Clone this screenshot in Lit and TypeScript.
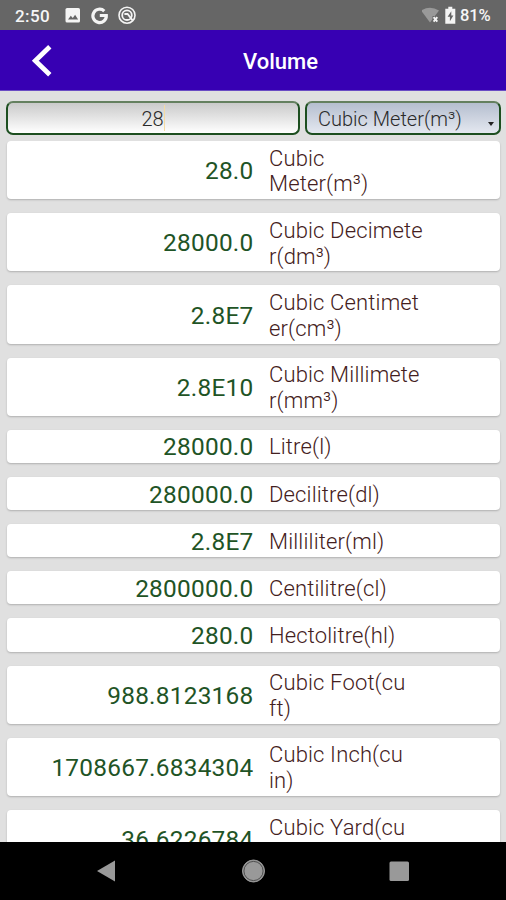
import { LitElement, html, css, svg } from "lit";
import { customElement, property } from "lit/decorators.js";

interface Row {
  value: string;
  lines: string[];
}

const ROWS: Row[] = [
  { value: "28.0", lines: ["Cubic", "Meter(m³)"] },
  { value: "28000.0", lines: ["Cubic Decimete", "r(dm³)"] },
  { value: "2.8E7", lines: ["Cubic Centimet", "er(cm³)"] },
  { value: "2.8E10", lines: ["Cubic Millimete", "r(mm³)"] },
  { value: "28000.0", lines: ["Litre(l)"] },
  { value: "280000.0", lines: ["Decilitre(dl)"] },
  { value: "2.8E7", lines: ["Milliliter(ml)"] },
  { value: "2800000.0", lines: ["Centilitre(cl)"] },
  { value: "280.0", lines: ["Hectolitre(hl)"] },
  { value: "988.8123168", lines: ["Cubic Foot(cu", "ft)"] },
  { value: "1708667.6834304", lines: ["Cubic Inch(cu", "in)"] },
  { value: "36.6226784", lines: ["Cubic Yard(cu", "\u00a0"] },
];

@customElement("status-bar")
export class StatusBar extends LitElement {
  static styles = css`
    :host {
      display: flex;
      align-items: center;
      height: 30px;
      flex: none;
      box-sizing: border-box;
      padding: 1px 14px 0 15px;
      background: #666;
      color: #f6f6f6;
      font-size: 17px;
      font-weight: 500;
    }
    .time { width: 50px; letter-spacing: 0.4px; }
    .left { width: 73px; height: 20px; }
    .right { width: 38px; height: 20px; margin-left: auto; }
    .battery { font-size: 16.5px; width: 32px; white-space: nowrap; letter-spacing: -0.1px; }
  `;
  render() {
    return html`
      <span class="time">2:50</span>
      ${svg`<svg class="left" viewBox="0 0 73 20">
        <rect x="0.5" y="2" width="14.5" height="14.5" rx="1.6" fill="#f4f4f4"/>
        <path d="M3 13.5l2.8-3.8 2 2.3 2.3-3.2 3 4.7z" fill="#666"/>
        <path d="M39.3 5.1A6.7 6.7 0 1 0 41.3 9.5H34.8" fill="none" stroke="#f4f4f4" stroke-width="3.2"/>
        <circle cx="62" cy="9.2" r="8" fill="none" stroke="#f4f4f4" stroke-width="1.6"/>
        <circle cx="62" cy="9.2" r="4.8" fill="none" stroke="#f4f4f4" stroke-width="1.8"/>
        <path d="M59.4 8h3.2l5 6.4" fill="none" stroke="#f4f4f4" stroke-width="1.8"/>
      </svg>`}
      ${svg`<svg class="right" viewBox="0 0 38 20">
        <path d="M-1 4.5Q8 -1.2 17 4.5L8 16.5z" fill="#999"/>
        <path d="M10.5 10h7v7h-7z" fill="#666"/>
        <path d="M11.6 11.2l3.7 4.5M15.3 11.2l-3.7 4.5" stroke="#f4f4f4" stroke-width="1.9"/>
        <path d="M26.3 0.8h4v2h3v14.9h-10V2.8h3z" fill="#f4f4f4"/>
        <path d="M29.3 5.3l-3.7 5.5h2.3v4.4l3.5-5.8h-2.1z" fill="#666"/>
      </svg>`}
      <span class="battery">81%</span>
    `;
  }
}

@customElement("title-bar")
export class TitleBar extends LitElement {
  static styles = css`
    :host {
      display: grid;
      grid-template-columns: 55px 1fr;
      align-items: center;
      height: 61px;
      flex: none;
      box-sizing: border-box;
      background: #3700b3;
      border-bottom: 1px solid #6a4cc4;
      color: #fff;
    }
    .back { width: 55px; height: 60px; }
    .title { font-size: 22px; font-weight: 500; text-align: center; padding-top: 3px; letter-spacing: 0; }
  `;
  @property() heading = "";
  render() {
    return html`
      ${svg`<svg class="back" viewBox="0 0 55 60">
        <path d="M49.8 16.8L35.3 30.8 49.8 44.8" fill="none" stroke="#fff" stroke-width="4.8"/>
      </svg>`}
      <div class="title">${this.heading}</div>
    `;
  }
}

@customElement("unit-row")
export class UnitRow extends LitElement {
  static styles = css`
    :host {
      display: grid;
      grid-template-columns: 246.5px 1fr;
      column-gap: 15.5px;
      align-items: center;
      flex: none;
      box-sizing: border-box;
      padding: 4.7px 0 3.6px;
      background: #fff;
      border-radius: 4px;
      box-shadow: 0 1px 2px rgba(0, 0, 0, 0.22);
    }
    .value { text-align: right; color: #1f5426; font-size: 24.4px; line-height: 25px; font-weight: 400; letter-spacing: 0.25px; }
    .label { color: #432020; font-size: 22px; line-height: 25px; font-weight: 300; letter-spacing: 0.15px; }
    .line { white-space: nowrap; }
    .line + .line { padding-top: 0.7px; margin-bottom: -0.7px; }
  `;
  @property({ attribute: false }) row!: Row;
  render() {
    return html`
      <div class="value">${this.row.value}</div>
      <div class="label">${this.row.lines.map((l) => html`<div class="line">${l}</div>`)}</div>
    `;
  }
}

@customElement("app-root")
export class AppRoot extends LitElement {
  static styles = css`
    :host {
      display: flex;
      flex-direction: column;
      height: 900px;
      overflow: hidden;
      background: #e0e0e0;
      font-family: Roboto, "Liberation Sans", sans-serif;
    }
    .entry {
      display: grid;
      grid-template-columns: 294px 196px;
      gap: 5px;
      padding: 10px 5px 6px 6px;
      flex: none;
    }
    .field {
      display: flex;
      align-items: center;
      justify-content: center;
      height: 34px;
      box-sizing: border-box;
      border: 2px solid #1d4f20;
      border-top-color: #64805f;
      border-radius: 7px;
      font-size: 20px;
      color: #2a2a2a;
      font-weight: 300;
    }
    .field span { padding-top: 1px; }
    .amount { background: linear-gradient(#cacaca, #fff); }
    .field .caret { width: 1px; height: 26px; background: #f3dba4; padding: 0; }
    .unit {
      justify-content: space-between;
      padding: 0 5px 0 11px;
      background: linear-gradient(#b5becf, #e4e8f0);
    }
    .arrow { width: 6px; height: 4px; margin-top: 11px; }
    .list {
      display: flex;
      flex-direction: column;
      gap: 13.9px;
      flex: 1;
      min-height: 0;
      overflow: hidden;
      padding: 0 6px 0 7px;
    }
    .nav {
      display: flex;
      flex: none;
      height: 58px;
      background: #000;
    }
    .keys { width: 506px; height: 58px; }
  `;
  render() {
    return html`
      <status-bar></status-bar>
      <title-bar heading="Volume"></title-bar>
      <div class="entry">
        <div class="field amount"><span>28</span><span class="caret"></span></div>
        <div class="field unit">
          <span>Cubic Meter(m³)</span>
          ${svg`<svg class="arrow" viewBox="0 0 6 4"><path d="M0 0h6L3 4z" fill="#222"/></svg>`}
        </div>
      </div>
      <div class="list">${ROWS.map((r) => html`<unit-row .row=${r}></unit-row>`)}</div>
      <div class="nav">
        ${svg`<svg class="keys" viewBox="0 0 506 58">
          <path d="M97 29L115 18.5V39.5z" fill="#999"/>
          <circle cx="253.5" cy="29" r="11" fill="#999" stroke="#999"/>
          <circle cx="253.5" cy="29" r="9.6" fill="none" stroke="#444" stroke-width="0.9"/>
          <rect x="389.5" y="19.5" width="19.5" height="19.5" rx="1.5" fill="#999"/>
        </svg>`}
      </div>
    `;
  }
}
